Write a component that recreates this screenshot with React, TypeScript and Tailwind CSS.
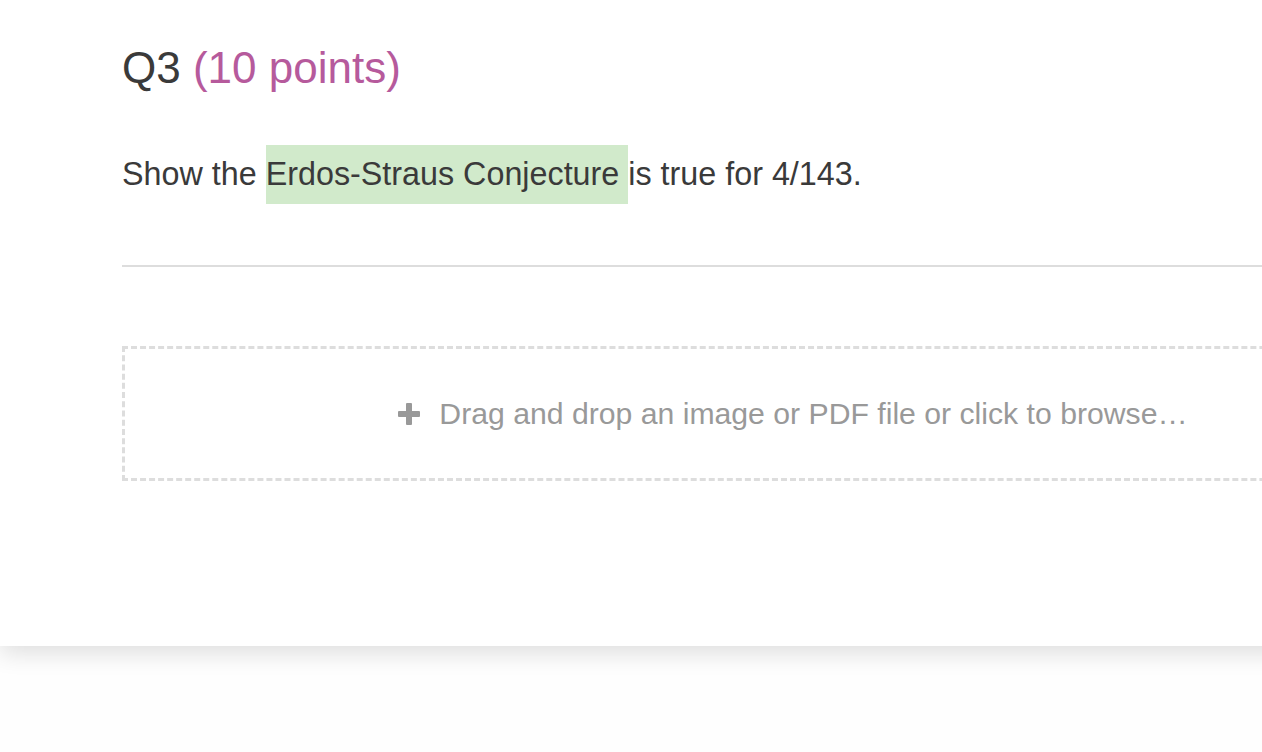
import React from 'react';

const FONT = { fontFamily: '"Liberation Sans", Arial, Helvetica, sans-serif' };

// thick plus used in the upload box
const PlusIcon = () => (
  <svg width="22" height="22" viewBox="0 0 22 22" className="shrink-0">
    <rect x="8" y="0" width="6" height="22" rx="1" fill="#999999" />
    <rect x="0" y="8" width="22" height="6" rx="1" fill="#999999" />
  </svg>
);

const App: React.FC = () => {
  return (
    <div className="w-full h-screen overflow-hidden bg-[#fefefe]" style={FONT}>
      <div className="w-[1500px] bg-white shadow-[0_8px_22px_rgba(0,0,0,0.12)] pl-[122px] pt-[38px] pb-[165px]">
        <div className="w-[1342px]">
          <h1 className="text-[44px] leading-[60px] text-[#3a3a3a]">
            Q3 <span className="text-[#b65a9c]">(10 points)</span>
          </h1>

          <p className="mt-[47px] text-[32.3px] leading-[59px] text-[#3a3a3a]">
            Show the{' '}
            <span className="inline-block bg-[#d1eacb] pr-[9px] leading-[59px]">Erdos-Straus Conjecture</span>is true for 4/143.
          </p>

          <div className="mt-[61px] h-[2px] bg-[#dddddd]" />

          <div className="mt-[79px] h-[135px] border-[3px] border-dashed border-[#dddddd] flex items-center justify-center gap-[19px] cursor-pointer">
            <PlusIcon />
            <span className="text-[30.2px] text-[#999999]">
              Drag and drop an image or PDF file or click to browse…
            </span>
          </div>
        </div>
      </div>
    </div>
  );
};

export default App;
